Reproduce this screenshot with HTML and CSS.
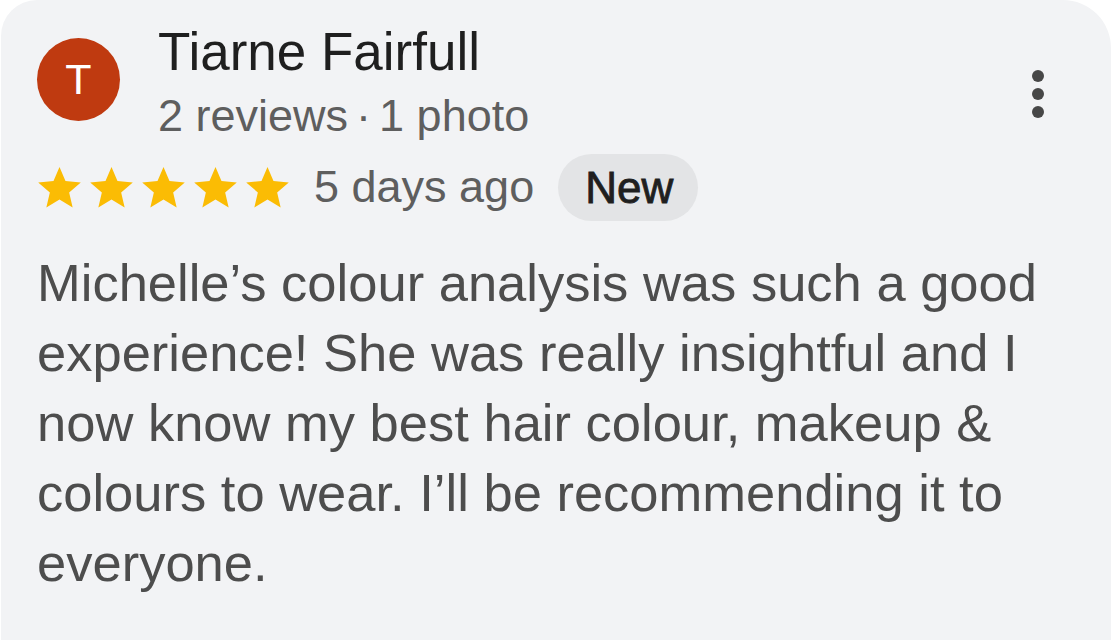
FILE: index.html
```html
<!DOCTYPE html>
<html lang="en">
<head>
<meta charset="utf-8">
<title>Review</title>
<link rel="stylesheet" href="styles.css">
</head>
<body>
<div class="card">
  <div class="header">
    <div class="avatar">T</div>
    <div class="info">
      <div class="name">Tiarne Fairfull</div>
      <div class="meta">2 reviews<span class="dot">·</span>1 photo</div>
    </div>
    <div class="menu" aria-label="More">
      <span></span><span></span><span></span>
    </div>
  </div>
  <div class="rating">
    <div class="stars">
      <svg viewBox="2 2 20 19.27" class="star"><path d="M12 17.27L18.18 21l-1.64-7.03L22 9.24l-7.19-.61L12 2 9.19 8.63 2 9.24l5.46 4.730L5.82 21z"/></svg>
      <svg viewBox="2 2 20 19.27" class="star"><path d="M12 17.27L18.18 21l-1.64-7.03L22 9.24l-7.19-.61L12 2 9.19 8.63 2 9.24l5.46 4.73L5.82 21z"/></svg>
      <svg viewBox="2 2 20 19.27" class="star"><path d="M12 17.27L18.18 21l-1.64-7.03L22 9.24l-7.19-.61L12 2 9.19 8.63 2 9.24l5.46 4.73L5.82 21z"/></svg>
      <svg viewBox="2 2 20 19.27" class="star"><path d="M12 17.27L18.18 21l-1.64-7.03L22 9.24l-7.19-.61L12 2 9.19 8.63 2 9.24l5.46 4.73L5.82 21z"/></svg>
      <svg viewBox="2 2 20 19.27" class="star"><path d="M12 17.27L18.18 21l-1.64-7.03L22 9.24l-7.19-.61L12 2 9.19 8.63 2 9.24l5.46 4.73L5.82 21z"/></svg>
    </div>
    <span class="date">5 days ago</span>
    <span class="chip">New</span>
  </div>
  <p class="text">Michelle’s colour analysis was such a good experience! She was really insightful and I now know my best hair colour, makeup &amp; colours to wear. I’ll be recommending it to everyone.</p>
</div>
</body>
</html>
```

FILE: styles.css
```css
html, body {
  margin: 0;
  padding: 0;
  background: #ffffff;
}

body {
  font-family: "Liberation Sans", Arial, sans-serif;
}

.card {
  margin-left: 1px;
  min-height: 640px;
  box-sizing: border-box;
  background: #f2f3f5;
  border-radius: 36px 48px 0 0;
  padding: 22px 40px 0 36px;
}

.header {
  display: flex;
  align-items: flex-start;
}

.avatar {
  flex: none;
  width: 83px;
  height: 83px;
  margin-top: 16px;
  border-radius: 50%;
  background: #bf3a10;
  color: #ffffff;
  font-size: 43px;
  line-height: 83px;
  text-align: center;
}

.info {
  margin-left: 38px;
  flex: 1;
}

.name {
  font-size: 53px;
  line-height: 60px;
  color: #1f1f1f;
}

.meta {
  margin-top: 6px;
  font-size: 45px;
  line-height: 56px;
  color: #5e5e5e;
}

.dot {
  margin: 0 8px;
}

.menu {
  flex: none;
  display: flex;
  flex-direction: column;
  gap: 6px;
  margin-top: 48px;
  margin-right: 27px;
}

.menu span {
  display: block;
  width: 12px;
  height: 12px;
  border-radius: 50%;
  background: #474747;
}

.rating {
  display: flex;
  align-items: center;
  margin-top: 9px;
  height: 68px;
}

.stars {
  display: flex;
  gap: 9px;
  margin-left: 1px;
}

.star {
  width: 43px;
  height: 41px;
  fill: #fbbc04;
  display: block;
}

.date {
  margin-left: 25px;
  font-size: 45px;
  line-height: 68px;
  color: #5e5e5e;
}

.chip {
  margin-left: 24px;
  height: 67px;
  padding: 0 25px 0 27px;
  border-radius: 34px;
  background: #e3e4e6;
  color: #1f1f1f;
  font-size: 44px;
  font-weight: 400;
  -webkit-text-stroke: 0.9px #1f1f1f;
  line-height: 67px;
}

.text {
  margin: 27px 0 0 0;
  max-width: 1040px;
  font-size: 52.5px;
  line-height: 70px;
  color: #4d4d4d;
}
```
